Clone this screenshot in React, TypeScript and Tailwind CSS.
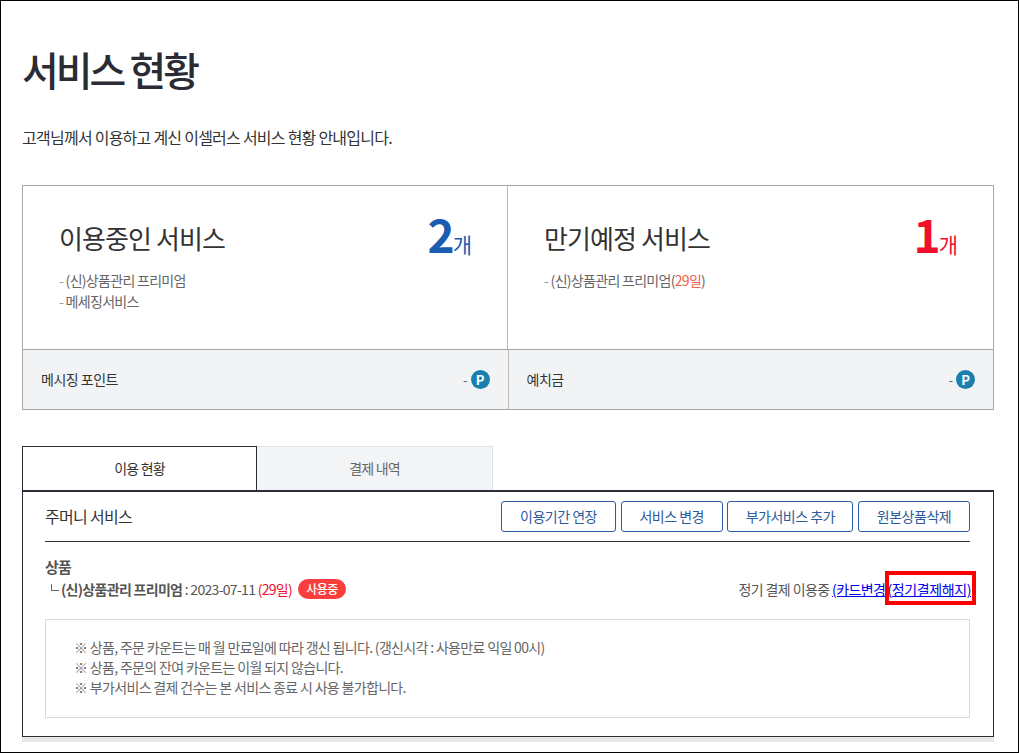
const FONT = "font-['Noto_Sans_CJK_KR','Noto_Sans',sans-serif]";

function PointIcon() {
  return (
    <span className="ml-[3px] flex h-[19px] w-[19px] items-center justify-center rounded-full bg-[#1a7fae] text-[13px] font-bold leading-none text-white">
      P
    </span>
  );
}

function StatCell({
  title,
  count,
  countColor,
  className,
  children,
}: {
  title: string;
  count: string;
  countColor: string;
  className: string;
  children: React.ReactNode;
}) {
  return (
    <div className={`h-full pl-[36px] pr-[35px] pt-[32px] ${className}`}>
      <div className="flex h-[40px] items-center justify-between">
        <div className="text-[26px] leading-[40px] tracking-[-0.9px] text-[#333]">{title}</div>
        <div className={`flex items-baseline ${countColor}`}>
          <span className="-mr-[2px] text-[46px] font-bold leading-[40px]">{count}</span>
          <span className="text-[21px] leading-[40px]">개</span>
        </div>
      </div>
      <div className="mt-[12px] text-[14px] leading-[21px] tracking-[-0.7px] text-[#666]">{children}</div>
    </div>
  );
}

function BalanceCell({ label }: { label: string }) {
  return (
    <div className="flex flex-1 items-center justify-between pl-[18px] pr-[18px]">
      <span className="pb-[1px] text-[14px] tracking-[-0.5px] text-[#333]">{label}</span>
      <span className="flex items-center text-[13px] text-[#4a6a8a]">
        - <PointIcon />
      </span>
    </div>
  );
}

function OutlineButton({ label, width }: { label: string; width: string }) {
  return (
    <button className={`h-[31px] rounded-[3px] border border-[#2a5ca8] bg-white text-center text-[14px] tracking-[-0.5px] text-[#2c5a9e] ${width}`}>
      {label}
    </button>
  );
}

export default function App() {
  return (
    <div className={`h-[753px] w-[1019px] overflow-hidden border border-black bg-white px-[21px] ${FONT}`}>
      <h1 className="mt-[40px] text-[40px] font-medium leading-[56px] tracking-[-3px] text-[#2b2b33]">서비스 현황</h1>
      <p className="mt-[28px] text-[16px] leading-[24px] tracking-[-0.75px] text-[#333]">
        고객님께서 이용하고 계신 이셀러스 서비스 현황 안내입니다.
      </p>

      <section className="mt-[36px] h-[225px] w-[972px] border border-[#a6a6a6]">
        <div className="flex h-[163px] divide-x divide-[#bbb]">
          <StatCell title="이용중인 서비스" count="2" countColor="text-[#1a5cb0]" className="w-[485px]">
            <div><span className="text-[#999]">- </span>(신)상품관리 프리미엄</div>
            <div><span className="text-[#999]">- </span>메세징서비스</div>
          </StatCell>
          <StatCell title="만기예정 서비스" count="1" countColor="text-[#f0102d]" className="flex-1">
            <div>
              <span className="text-[#999]">- </span>(신)상품관리 프리미엄(<span className="text-[#f4604a]">29일</span>)
            </div>
          </StatCell>
        </div>
        <div className="flex h-[60px] divide-x divide-[#bbb] border-t border-[#a6a6a6] bg-[#f2f3f5]">
          <BalanceCell label="메시징 포인트" />
          <BalanceCell label="예치금" />
        </div>
      </section>

      <div className="mt-[36px] flex h-[44px] w-[471px] text-[14px] tracking-[-0.8px]">
        <div className="flex h-[44px] w-[235px] items-center justify-center border border-b-0 border-[#2d2d3a] bg-white pb-[1px] text-[#333]">이용 현황</div>
        <div className="flex h-[44px] flex-1 items-center justify-center border border-b-0 border-l-0 border-[#dfe3e8] bg-[#f2f4f6] text-[#666]">결제 내역</div>
      </div>

      <section className="h-[247px] w-[972px] border border-t-2 border-[#2d2d3a] pl-[22px] pr-[23px] shadow-[0_5px_0_#e8e8e8]">
        <div className="flex h-[50px] items-center justify-between border-b border-[#333] pb-[1px]">
          <h2 className="text-[16px] tracking-[-0.7px] text-[#333]">주머니 서비스</h2>
          <div className="flex gap-[4.67px]">
            <OutlineButton label="이용기간 연장" width="w-[115px]" />
            <OutlineButton label="서비스 변경" width="w-[102px]" />
            <OutlineButton label="부가서비스 추가" width="w-[126px]" />
            <OutlineButton label="원본상품삭제" width="w-[112px]" />
          </div>
        </div>

        <div className="mt-[15px] text-[14px] tracking-[-0.7px] text-[#555]">
          <div className="text-[15px] font-bold leading-[20px]">상품</div>
          <div className="flex h-[24px] items-center justify-between">
            <div className="flex items-center">
              <span className="ml-[6px] mr-[2px] mb-[4px] h-[7px] w-[8px] border-b border-l border-[#666]" />
              <span className="font-bold">(신)상품관리 프리미엄</span>
              <span>&nbsp;: 2023-07-11&nbsp;</span>
              <span className="text-[#f01030]">(29일)</span>
              <span className="ml-[6px] flex h-[20px] w-[48px] items-center justify-center rounded-full bg-[#fa3e3e] text-[12px] font-medium tracking-[-0.5px] text-white">사용중</span>
            </div>
            <div className="-mr-[1px] flex items-center tracking-[-0.6px]">
              <span>정기 결제 이용중&nbsp;</span>
              <a className="text-[#0000ee] underline">(카드변경)</a>
              <a className="relative -ml-[2px] tracking-[-0.4px] text-[#0000ee] underline after:absolute after:-bottom-[5px] after:-left-[2px] after:-right-[5px] after:-top-[8px] after:border-4 after:border-[#f00] after:content-['']">(정기결제해지)</a>
            </div>
          </div>
        </div>

        <div className="mt-[18px] h-[99px] border border-[#d9d9d9] px-[28px] py-[17px] text-[14px] leading-[20px] tracking-[-0.67px] text-[#666]">
          <p>※ 상품, 주문 카운트는 매 월 만료일에 따라 갱신 됩니다. (갱신시각 : 사용만료 익일 00시)</p>
          <p>※ 상품, 주문의 잔여 카운트는 이월 되지 않습니다.</p>
          <p>※ 부가서비스 결제 건수는 본 서비스 종료 시 사용 불가합니다.</p>
        </div>
      </section>
    </div>
  );
}
